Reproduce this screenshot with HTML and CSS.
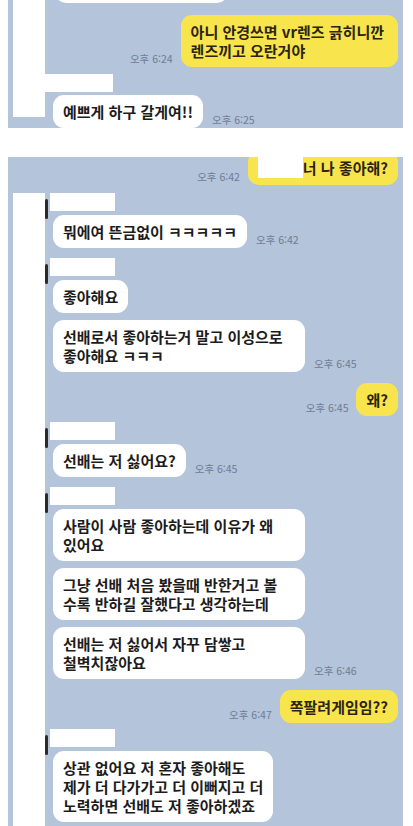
FILE: index.html
```html
<!DOCTYPE html>
<html lang="ko">
<head>
  <meta charset="UTF-8">
  <meta name="viewport" content="width=device-width, initial-scale=1.0">
  <title>대화 캡처</title>
  <link rel="stylesheet" href="styles.css">
</head>
<body>
  <!-- first capture -->
  <div class="chat chat-top">
    <div class="strip strip-short"></div>
    <div class="msgs">
      <div class="row other cut-top">
        <div class="bubble blank"></div>
        <span class="time">오후 6:23</span>
      </div>
      <div class="row me first-me">
        <span class="time">오후 6:24</span>
        <div class="bubble">아니 안경쓰면 vr렌즈 긁히니깐<br>렌즈끼고 오란거야</div>
      </div>
      <div class="name-row wide-name">
        <div class="name"></div>
      </div>
      <div class="row other">
        <div class="bubble">예쁘게 하구 갈게여!!</div>
        <span class="time">오후 6:25</span>
      </div>
    </div>
  </div>

  <!-- second capture -->
  <div class="chat chat-bottom">
    <div class="row me cut-me">
      <span class="time">오후 6:42</span>
      <div class="bubble"><span class="redact"></span>너 나 좋아해?</div>
    </div>
    <div class="thread">
      <div class="strip"></div>
      <div class="msgs">
        <div class="group">
          <div class="name-row"><span class="mark"></span><div class="name"></div></div>
          <div class="row other">
            <div class="bubble">뭐에여 뜬금없이 ㅋㅋㅋㅋㅋ</div>
            <span class="time">오후 6:42</span>
          </div>
        </div>
        <div class="group">
          <div class="name-row"><span class="mark"></span><div class="name"></div></div>
          <div class="row other">
            <div class="bubble">좋아해요</div>
          </div>
          <div class="row other">
            <div class="bubble full">선배로서 좋아하는거 말고 이성으로<br>좋아해요 ㅋㅋㅋ</div>
            <span class="time">오후 6:45</span>
          </div>
        </div>
        <div class="row me spaced">
          <span class="time">오후 6:45</span>
          <div class="bubble">왜?</div>
        </div>
        <div class="group">
          <div class="name-row"><span class="mark"></span><div class="name"></div></div>
          <div class="row other">
            <div class="bubble">선배는 저 싫어요?</div>
            <span class="time">오후 6:45</span>
          </div>
        </div>
        <div class="group">
          <div class="name-row"><span class="mark"></span><div class="name"></div></div>
          <div class="row other">
            <div class="bubble full">사람이 사람 좋아하는데 이유가 왜<br>있어요</div>
          </div>
          <div class="row other">
            <div class="bubble full">그냥 선배 처음 봤을때 반한거고 볼<br>수록 반하길 잘했다고 생각하는데</div>
          </div>
          <div class="row other">
            <div class="bubble full">선배는 저 싫어서 자꾸 담쌓고<br>철벽치잖아요</div>
            <span class="time">오후 6:46</span>
          </div>
        </div>
        <div class="row me spaced">
          <span class="time">오후 6:47</span>
          <div class="bubble">쪽팔려게임임??</div>
        </div>
        <div class="group">
          <div class="name-row"><span class="mark"></span><div class="name"></div></div>
          <div class="row other">
            <div class="bubble">상관 없어요 저 혼자 좋아해도<br>제가 더 다가가고 더 이뻐지고 더<br>노력하면 선배도 저 좋아하겠죠</div>
          </div>
        </div>
      </div>
    </div>
  </div>
</body>
</html>
```

FILE: styles.css
```css
body {
    margin: 0;
    background: #fff;
    font-family: "Noto Sans CJK KR", "Noto Sans", sans-serif;
}
.chat {
    margin-left: 8px;
    width: 395px;
    background: #b3c4db;
    overflow: hidden;
    display: flex;
}
.chat-top {
    height: 128px;
    margin-bottom: 29px;
}
.chat-bottom {
    height: 669px;
    flex-direction: column;
}
.strip {
    flex: none;
    width: 32px;
    margin-left: 5px;
    background: #fff;
}
.strip-short {
    height: 117px;
}
.thread {
    display: flex;
    flex: 1;
    margin-top: 8px;
}
.msgs {
    flex: 1;
    display: flex;
    flex-direction: column;
}
.group {
    margin-top: 10px;
}
.group:first-child {
    margin-top: 0;
}
.name-row {
    display: flex;
    align-items: flex-start;
    height: 18px;
    margin-bottom: 4px;
}
.mark {
    width: 3px;
    height: 20px;
    margin-top: 6px;
    border-radius: 2px;
    background: #2a2a2a;
}
.name {
    width: 65px;
    height: 18px;
    margin-left: 2px;
    background: #fff;
}
.wide-name {
    height: 25px;
    margin: 7px 0 0 -32px;
}
.wide-name .name {
    width: 100px;
    margin-left: 0;
}
.row {
    display: flex;
    align-items: flex-end;
    gap: 9px;
}
.row + .row {
    margin-top: 7px;
}
.row.me {
    justify-content: flex-end;
    gap: 8px;
    padding-right: 5px;
}
.row.other .bubble {
    margin-left: 8px;
}
.bubble {
    background: #fff;
    border-radius: 11px;
    padding: 7px 10px;
    font-size: 15px;
    line-height: 19px;
    font-weight: 600;
    color: #1c1c1c;
    white-space: nowrap;
}
.bubble.full {
    min-width: 232px;
}
.me .bubble {
    background: #f8e54d;
    color: #2b2410;
}
.time {
    font-size: 10.5px;
    line-height: 13px;
    color: #6e7c94;
    margin-bottom: 2px;
    white-space: nowrap;
}
.cut-top {
    margin-top: -25px;
}
.cut-top .bubble.blank {
    width: 153px;
    height: 14px;
    margin-left: 10px;
}
.first-me {
    padding-right: 0;
}
.row.first-me {
    margin-top: 12px;
}
.first-me .bubble {
    padding: 7px 14px 7px 10px;
}
.cut-me {
    margin-top: -6px;
}
.redact {
    display: inline-block;
    width: 45px;
    height: 21px;
    vertical-align: top;
    margin-top: -1px;
    background: #fff;
}
.row.me.spaced {
    margin-top: 11px;
}
.row.me.spaced + .group {
    margin-top: 6px;
}
```
